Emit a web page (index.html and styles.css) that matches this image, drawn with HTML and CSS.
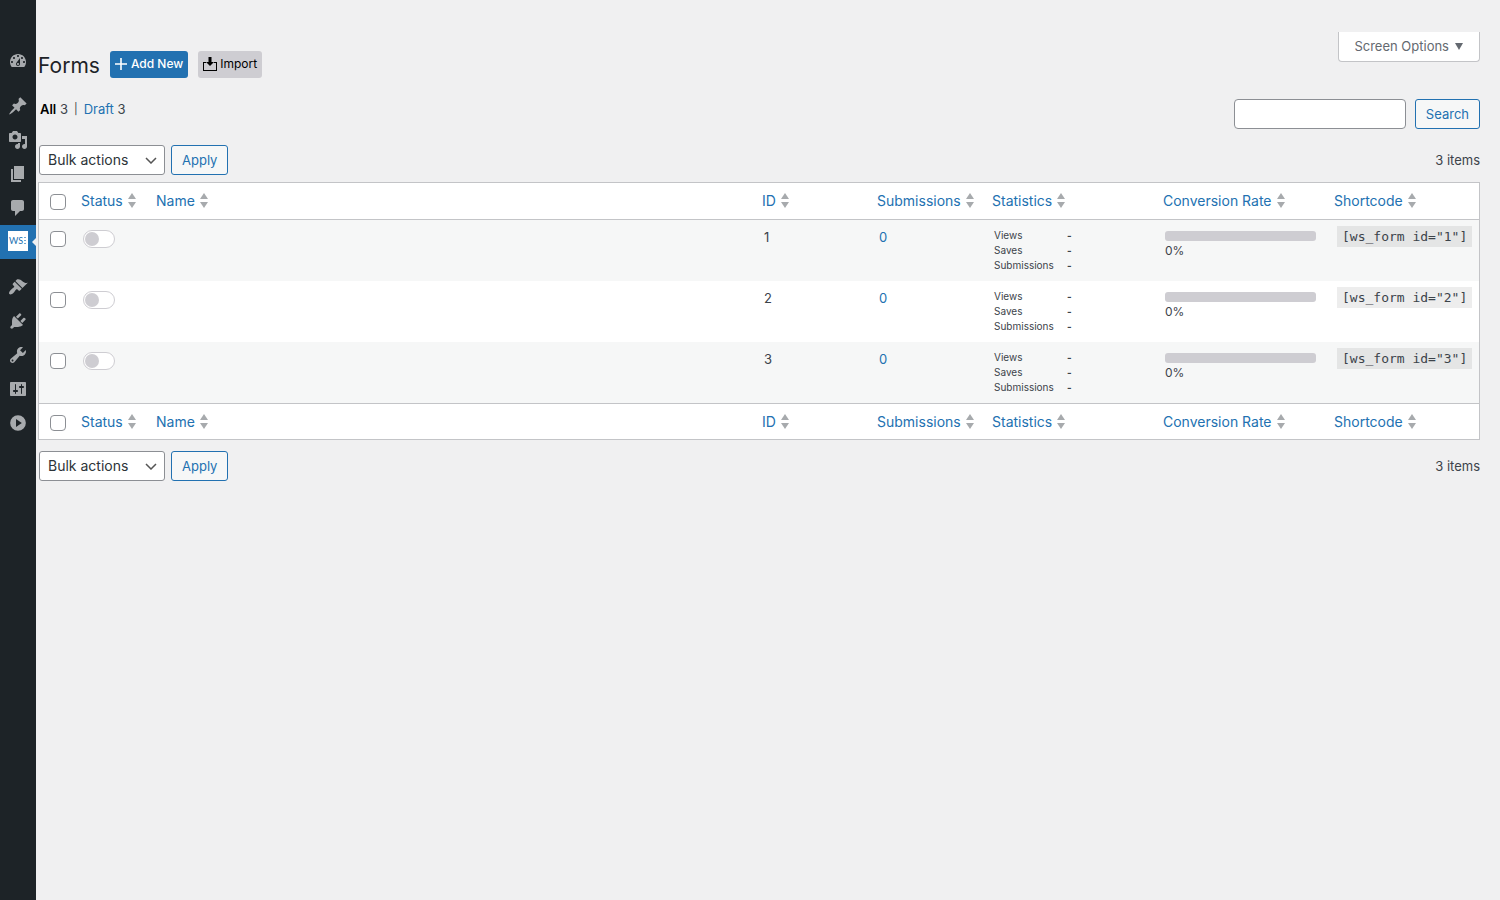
FILE: index.html
```html
<!DOCTYPE html>
<html lang="en">
<head>
  <meta charset="UTF-8">
  <title>Forms</title>
  <meta name="viewport" content="width=device-width, initial-scale=1">
  <link rel="stylesheet" href="styles.css">
</head>
<body>
  <nav class="admin-menu" aria-label="Main menu">
    <a href="#" aria-label="Dashboard"><svg viewBox="0 0 20 20"><path d="M3.76 16h12.48c1.1-1.37 1.76-3.11 1.76-5 0-4.42-3.58-8-8-8s-8 3.58-8 8c0 1.89.66 3.63 1.76 5zM10 4c.55 0 1 .45 1 1s-.45 1-1 1-1-.45-1-1 .45-1 1-1zM6 6c.55 0 1 .45 1 1s-.45 1-1 1-1-.45-1-1 .45-1 1-1zm8 0c.55 0 1 .45 1 1s-.45 1-1 1-1-.45-1-1 .45-1 1-1zm-5.37 5.55L12 7v6c0 1.1-.9 2-2 2s-2-.9-2-2c0-.57.24-1.08.63-1.45zM4 10c.55 0 1 .45 1 1s-.45 1-1 1-1-.45-1-1 .45-1 1-1zm12 0c.55 0 1 .45 1 1s-.45 1-1 1-1-.45-1-1 .45-1 1-1zm-5 3c0-.55-.45-1-1-1s-1 .45-1 1 .45 1 1 1 1-.45 1-1z"/></svg></a>
    <div class="separator"></div>
    <a href="#" aria-label="Posts"><svg viewBox="0 0 20 20"><path d="M10.44 3.02l1.82-1.82 6.36 6.35-1.83 1.82c-1.05-.68-2.48-.57-3.41.36l-.75.75c-.92.93-1.04 2.35-.35 3.41l-1.83 1.82-2.41-2.41-2.8 2.79c-.42.42-3.38 2.71-3.8 2.29s1.86-3.39 2.28-3.81l2.79-2.79L4.1 9.36l1.83-1.82c1.05.69 2.48.57 3.4-.36l.75-.75c.93-.92 1.05-2.35.36-3.41z"/></svg></a>
    <a href="#" aria-label="Media"><svg viewBox="0 0 20 20"><path d="M13 11V4c0-.55-.45-1-1-1h-1.67L9 1H5L3.67 3H2c-.55 0-1 .45-1 1v7c0 .55.45 1 1 1h10c.55 0 1-.45 1-1zM7 4.5c1.38 0 2.5 1.12 2.5 2.5S8.38 9.5 7 9.5 4.5 8.38 4.5 7 5.62 4.5 7 4.5zM14 6h5v10.5c0 1.38-1.12 2.5-2.5 2.5S14 17.88 14 16.5s1.12-2.5 2.5-2.5c.17 0 .34.02.5.05V9h-3V6zm-4 8.05V13h2v3.5c0 1.38-1.12 2.5-2.5 2.5S7 17.88 7 16.5 8.12 14 9.5 14c.17 0 .34.02.5.05z"/></svg></a>
    <a href="#" aria-label="Pages"><svg viewBox="0 0 20 20"><path d="M6 15V2h10v13H6zm-1 1h8v2H3V5h2v11z"/></svg></a>
    <a href="#" aria-label="Comments"><svg viewBox="0 0 20 20"><path d="M5 2h9c1.1 0 2 .9 2 2v7c0 1.1-.9 2-2 2h-2l-5 5v-5H5c-1.1 0-2-.9-2-2V4c0-1.1.9-2 2-2z"/></svg></a>
    <a href="#" class="current" aria-label="WS Form"><span class="ws-logo">WS<svg viewBox="0 0 3 8"><path d="M0 0h2v1H0zM0 3h2v1H0zM0 6h2v1H0z"/></svg></span></a>
    <div class="separator"></div>
    <a href="#" aria-label="Appearance"><svg viewBox="0 0 20 20"><path d="M14.48 11.06L7.41 3.99l1.5-1.5c.5-.56 2.3-.47 3.51.32 1.21.8 1.43 1.28 2.91 2.1 1.18.64 2.45 1.26 4.45.85zm-.71.71L6.7 4.7 4.93 6.47c-.39.39-.39 1.02 0 1.41l1.06 1.06c.39.39.39 1.03 0 1.42-.6.6-1.43 1.11-2.21 1.69-.35.26-.7.53-1.01.84C1.43 14.23.4 16.08 1.4 17.07c.99 1 2.84-.03 4.18-1.36.31-.31.58-.66.85-1.02.57-.78 1.08-1.61 1.69-2.21.39-.39 1.02-.39 1.41 0l1.06 1.06c.39.39 1.02.39 1.41 0z"/></svg></a>
    <a href="#" aria-label="Plugins"><svg viewBox="0 0 20 20"><path d="M13.11 4.36L9.87 7.6 8 5.73l3.24-3.24c.35-.34 1.05-.2 1.56.32.52.51.66 1.21.31 1.55zm-8 1.77l.91-1.12 9.01 9.01-1.19.84c-.71.71-2.63 1.16-3.82 1.16H6.14L4.9 17.26c-.59.59-1.54.59-2.12 0-.59-.58-.59-1.53 0-2.12l1.24-1.24v-3.88c0-1.13.4-3.19 1.09-3.89zm7.26 3.97l3.24-3.24c.34-.35 1.04-.21 1.55.31.52.51.66 1.21.31 1.55l-3.24 3.25z"/></svg></a>
    <a href="#" aria-label="Tools"><svg viewBox="0 0 20 20"><path d="M16.68 9.77c-1.34 1.34-3.3 1.67-4.95.99l-5.41 6.52c-.99.99-2.59.99-3.58 0s-.99-2.59 0-3.57l6.52-5.42c-.68-1.65-.35-3.61.99-4.95 1.28-1.28 3.12-1.62 4.72-1.06l-2.89 2.89 2.82 2.82 2.86-2.87c.53 1.58.18 3.39-1.08 4.65zM3.81 16.21c.4.39 1.04.39 1.43 0 .4-.4.4-1.04 0-1.43-.39-.4-1.03-.4-1.43 0-.39.39-.39 1.03 0 1.43z"/></svg></a>
    <a href="#" aria-label="Settings"><svg viewBox="0 0 20 20"><path d="M18 16V4c0-.55-.45-1-1-1H3c-.55 0-1 .45-1 1v12c0 .55.45 1 1 1h14c.55 0 1-.45 1-1zM8 11h1c.55 0 1 .45 1 1s-.45 1-1 1H8v1.5c0 .28-.22.5-.5.5s-.5-.22-.5-.5V13H6c-.55 0-1-.45-1-1s.45-1 1-1h1V5.5c0-.28.22-.5.5-.5s.5.22.5.5V11zm5-2h-1c-.55 0-1-.45-1-1s.45-1 1-1h1V5.5c0-.28.22-.5.5-.5s.5.22.5.5V7h1c.55 0 1 .45 1 1s-.45 1-1 1h-1v5.5c0 .28-.22.5-.5.5s-.5-.22-.5-.5V9z"/></svg></a>
    <button type="button" aria-label="Expand menu"><svg viewBox="0 0 20 20"><path d="M10 2.16a7.84 7.84 0 1 0 0 15.68 7.84 7.84 0 0 0 0-15.68zM8 13.88V6.12l5.82 3.85z"/></svg></button>
  </nav>

  <main>
    <header class="top">
      <h1>Forms</h1>
      <div class="actions">
        <a href="#" class="btn-add"><svg viewBox="0 0 12 12"><path d="M5.200 0h1.600v5.200H12v1.600H6.800V12H5.200V6.800H0V5.200h5.200z"/></svg>Add New</a>
        <button type="button" class="btn-import"><svg viewBox="0 0 14 14"><path d="M5.500 0h3v5H11L7 9 3 5h2.500zM0 5h3v1H1v7h12V6h-2V5h3v9H0z"/></svg>Import</button>
      </div>
      <button type="button" class="screen-options">Screen Options<svg viewBox="0 0 8 7"><path d="M0 0h8L4 7z"/></svg></button>
    </header>

    <div class="filters">
      <ul class="views">
        <li><a href="#" class="active">All</a> 3</li>
        <li class="divider">|</li>
        <li><a href="#">Draft</a> 3</li>
      </ul>
      <form class="search">
        <input type="search" aria-label="Search forms">
        <button type="button" class="button">Search</button>
      </form>
    </div>

    <div class="tablenav">
      <select aria-label="Bulk actions"><option>Bulk actions</option></select>
      <button type="button" class="button">Apply</button>
      <span class="count">3 items</span>
    </div>

    <table>
      <thead>
        <tr>
          <td class="col-cb"><input type="checkbox" aria-label="Select all"></td>
          <th class="col-status"><a href="#">Status<i class="sort"></i></a></th>
          <th><a href="#">Name<i class="sort"></i></a></th>
          <th class="col-id"><a href="#">ID<i class="sort"></i></a></th>
          <th class="col-id"><a href="#">Submissions<i class="sort"></i></a></th>
          <th class="col-stats"><a href="#">Statistics<i class="sort"></i></a></th>
          <th class="col-stats"><a href="#">Conversion Rate<i class="sort"></i></a></th>
          <th class="col-code"><a href="#">Shortcode<i class="sort"></i></a></th>
        </tr>
      </thead>
      <tbody>
        <tr>
          <td class="col-cb"><input type="checkbox" aria-label="Select form 1"></td>
          <td><input type="checkbox" class="toggle" aria-label="Publish form 1"></td>
          <td></td>
          <td>1</td>
          <td><a href="#">0</a></td>
          <td><dl><dt>Views</dt><dd>-</dd><dt>Saves</dt><dd>-</dd><dt>Submissions</dt><dd>-</dd></dl></td>
          <td><div class="bar"></div><div class="rate">0%</div></td>
          <td class="shortcode"><code>[ws_form id="1"]</code></td>
        </tr>
        <tr>
          <td class="col-cb"><input type="checkbox" aria-label="Select form 2"></td>
          <td><input type="checkbox" class="toggle" aria-label="Publish form 2"></td>
          <td></td>
          <td>2</td>
          <td><a href="#">0</a></td>
          <td><dl><dt>Views</dt><dd>-</dd><dt>Saves</dt><dd>-</dd><dt>Submissions</dt><dd>-</dd></dl></td>
          <td><div class="bar"></div><div class="rate">0%</div></td>
          <td class="shortcode"><code>[ws_form id="2"]</code></td>
        </tr>
        <tr>
          <td class="col-cb"><input type="checkbox" aria-label="Select form 3"></td>
          <td><input type="checkbox" class="toggle" aria-label="Publish form 3"></td>
          <td></td>
          <td>3</td>
          <td><a href="#">0</a></td>
          <td><dl><dt>Views</dt><dd>-</dd><dt>Saves</dt><dd>-</dd><dt>Submissions</dt><dd>-</dd></dl></td>
          <td><div class="bar"></div><div class="rate">0%</div></td>
          <td class="shortcode"><code>[ws_form id="3"]</code></td>
        </tr>
      </tbody>
      <tfoot>
        <tr>
          <td class="col-cb"><input type="checkbox" aria-label="Select all"></td>
          <th><a href="#">Status<i class="sort"></i></a></th>
          <th><a href="#">Name<i class="sort"></i></a></th>
          <th><a href="#">ID<i class="sort"></i></a></th>
          <th><a href="#">Submissions<i class="sort"></i></a></th>
          <th><a href="#">Statistics<i class="sort"></i></a></th>
          <th><a href="#">Conversion Rate<i class="sort"></i></a></th>
          <th><a href="#">Shortcode<i class="sort"></i></a></th>
        </tr>
      </tfoot>
    </table>

    <div class="tablenav bottom">
      <select aria-label="Bulk actions"><option>Bulk actions</option></select>
      <button type="button" class="button">Apply</button>
      <span class="count">3 items</span>
    </div>
  </main>
</body>
</html>
```
FILE: styles.css
```css
:root {
  --blue: #2271b1;
  --line: #c3c4c7;
  --grey: #cecdd2;
}

* {
  box-sizing: border-box;
}

body {
  margin: 0;
  min-height: 100vh;
  display: flex;
  background: #f0f0f1;
  color: #3c434a;
  font: 13px/20px Inter, "Liberation Sans", sans-serif;
}

a {
  color: var(--blue);
  text-decoration: none;
}

button, input, select {
  font-family: inherit;
  margin: 0;
}

/* side menu */
.admin-menu {
  width: 36px;
  flex: none;
  padding-top: 44px;
  background: #1d2327;
}

.admin-menu a,
.admin-menu button {
  position: relative;
  display: flex;
  width: 36px;
  height: 34px;
  padding: 0;
  align-items: center;
  justify-content: center;
  border: 0;
  background: none;
}

.admin-menu svg {
  width: 20px;
  height: 20px;
  fill: #a7aaad;
}

.separator {
  height: 11px;
}

.admin-menu .current {
  padding-bottom: 2px;
  background: var(--blue);
}

.current::after {
  content: "";
  position: absolute;
  right: 0;
  top: 13px;
  border: 4px solid transparent;
  border-left: 0;
  border-right-color: #f0f0f1;
}

.ws-logo {
  display: flex;
  width: 20px;
  height: 20px;
  align-items: center;
  justify-content: center;
  gap: 1px;
  background: #fff;
  color: var(--blue);
  font-family: Lato, sans-serif;
  font-size: 9px;
}

.admin-menu .ws-logo svg {
  width: 3px;
  height: 8px;
  fill: #72a5cf;
}

/* page */
main {
  flex: 1;
  min-width: 0;
  padding: 32px 20px 20px 2px;
}

.top {
  display: flex;
  align-items: flex-start;
}

h1 {
  margin: 19px 10px 0 0;
  color: #1d2327;
  font-size: 21px;
  font-weight: 400;
  line-height: 30px;
}

.actions {
  display: flex;
  gap: 10px;
  margin-top: 19px;
}

.btn-add,
.btn-import {
  display: flex;
  height: 27px;
  padding: 0 5px 2px;
  align-items: center;
  gap: 4px;
  border: 0;
  border-radius: 3px;
  font-size: 12px;
  font-weight: 500;
}

.btn-add {
  background: var(--blue);
  color: #fff;
}

.btn-import {
  gap: 3px;
  background: var(--grey);
  color: #000;
  font-weight: 400;
}

.btn-add svg {
  width: 12px;
  height: 12px;
  fill: #fff;
}

.btn-import svg {
  width: 14px;
  height: 14px;
}

.screen-options {
  display: flex;
  height: 30px;
  margin-left: auto;
  padding: 0 16px 1px 15px;
  align-items: center;
  gap: 6px;
  border: 1px solid var(--line);
  border-top: 0;
  border-radius: 0 0 4px 4px;
  background: #fff;
  color: #646970;
  font-size: 13px;
}

.screen-options svg {
  width: 8px;
  height: 7px;
  fill: #646970;
}

.filters {
  display: flex;
  margin-top: 18px;
  justify-content: space-between;
}

.views {
  display: flex;
  margin: 0;
  padding: 0 0 0 2px;
  gap: 6px;
  list-style: none;
}

.views .active {
  color: #000;
  font-weight: 600;
}

.divider {
  font-size: 11px;
}

.search {
  display: flex;
  gap: 9px;
}

.search input {
  width: 172px;
  height: 30px;
  border: 1px solid #8c8f94;
  border-radius: 4px;
  background: #fff;
}

.button {
  height: 30px;
  padding: 0 10px;
  border: 1px solid var(--blue);
  border-radius: 3px;
  background: #f6f7f7;
  color: var(--blue);
  font-size: 13px;
}

.tablenav {
  display: flex;
  margin: 16px 0 7px 1px;
  align-items: center;
  gap: 6px;
}

.tablenav.bottom {
  margin-top: 11px;
}

.tablenav select {
  width: 126px;
  height: 30px;
  padding: 0 24px 1px 8px;
  appearance: none;
  border: 1px solid #8c8f94;
  border-radius: 3px;
  background: #fff url('data:image/svg+xml,<svg xmlns="http://www.w3.org/2000/svg" width="12" height="7" viewBox="0 0 12 7"><path d="M1 1l5 5 5-5" fill="none" stroke="%23555" stroke-width="1.5"/></svg>') no-repeat right 7px center;
  color: #2c3338;
  font-size: 14px;
}

.count {
  margin-left: auto;
}

/* list table */
table {
  width: 100%;
  table-layout: fixed;
  border: 1px solid var(--line);
  border-spacing: 0;
  background: #fff;
}

th, td {
  padding: 8px;
  text-align: left;
  vertical-align: top;
  font-weight: 400;
}

thead th, thead td {
  border-bottom: 1px solid var(--line);
}

tfoot th, tfoot td {
  border-top: 1px solid var(--line);
}

tfoot th {
  padding-bottom: 7px;
}

th {
  font-size: 14px;
  white-space: nowrap;
}

tbody tr {
  height: 61px;
}

tbody td {
  line-height: 18px;
}

tbody tr:nth-child(odd) {
  background: #f6f7f7;
}

.col-cb { width: 34px; padding: 11px 0 0 11px; }
.col-status { width: 75px; }
.col-id { width: 115px; }
.col-stats { width: 171px; }
.col-code { width: 153px; }

th a {
  display: flex;
  align-items: center;
  gap: 5px;
}

.sort {
  display: flex;
  padding-bottom: 1px;
  flex-direction: column;
  gap: 3px;
}

.sort::before,
.sort::after {
  content: "";
  border: 4px solid transparent;
}

.sort::before {
  border-top: 0;
  border-bottom: 6px solid #a7aaad;
}

.sort::after {
  border-bottom: 0;
  border-top: 6px solid #a7aaad;
}

input[type="checkbox"] {
  display: block;
  width: 16px;
  height: 16px;
  appearance: none;
  border: 1px solid #8c8f94;
  border-radius: 4px;
  background: #fff;
}

input.toggle[type="checkbox"] {
  width: 32px;
  height: 18px;
  margin: 2px;
  padding: 1px;
  border-color: var(--grey);
  border-radius: 9px;
}

.toggle::before {
  content: "";
  display: block;
  width: 14px;
  height: 14px;
  border-radius: 50%;
  background: var(--grey);
}

tbody td:nth-child(4),
tbody td:nth-child(5) {
  padding-left: 10px;
}

dl {
  display: grid;
  grid-template-columns: 73px auto;
  margin: 0 0 0 2px;
  font-size: 10px;
  line-height: 15px;
}

dd {
  margin: 0;
  font-weight: 700;
}

.bar {
  height: 10px;
  margin: 3px 2px 0;
  border-radius: 3px;
  background: var(--grey);
}

.rate {
  margin-left: 2px;
  font-size: 12px;
  line-height: 20px;
}

td.shortcode {
  padding: 6px 0 0 11px;
}

code {
  display: block;
  width: max-content;
  padding: 0 5px;
  background: rgba(0, 0, 0, 0.07);
  font: 13px/21px "DejaVu Sans Mono", monospace;
}
```
